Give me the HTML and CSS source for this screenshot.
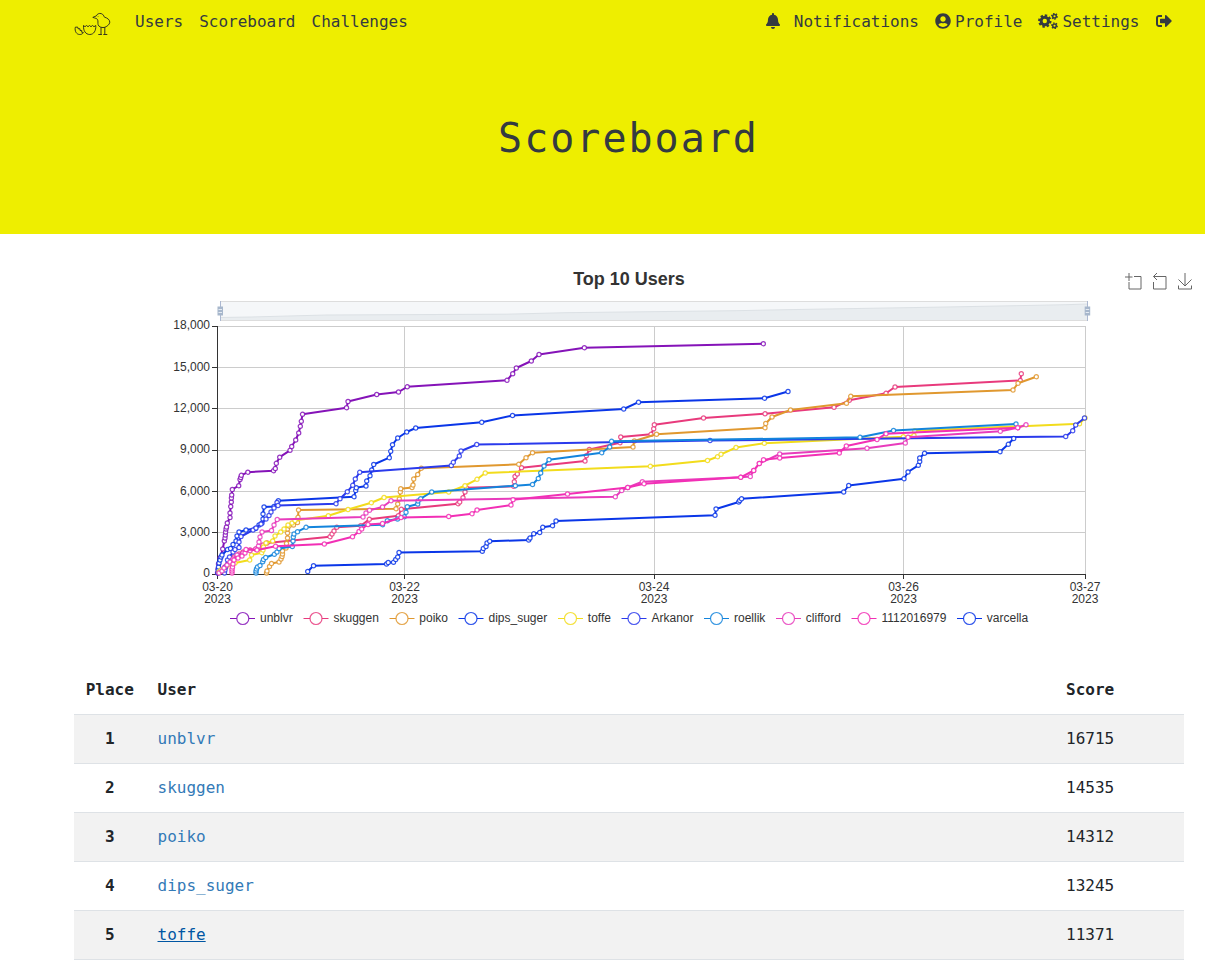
FILE: index.html
```html
<!DOCTYPE html>
<html lang="en">
<head>
<meta charset="utf-8">
<title>Scoreboard</title>
<link rel="stylesheet" href="styles.css">
</head>
<body>
<div class="page">
  <header class="hero">
    <nav class="navbar">
      <a class="brand" href="#" aria-label="Home">
        <svg width="38" height="24" viewBox="74 12 38 24" fill="none" stroke="#222" stroke-width=".9">
          <path d="M92.800 17.400l3.500-1.500c.8-2 3-2.900 4.900-2.300 2 .5 2.500 2.300 3.300 3.600 3 .7 5.300 2.700 5.300 5-.2 2.400-3 4.600-5.700 5.300-3 .3-5.400-.8-6-2.800-.5-2.100.3-3.300-.6-5.200-.5-1-2.400-1.300-4.700-2.100z"/>
          <path d="M101 27.300v6.900m3.800-7v6.900m-6.500.4h3.600m1.400 0h4M97.800 16.500h.5"/>
          <path d="M83.500 25.500l1.500 1.200 1.500-1.200 1.500 1.200 1.500-1.200 1.500 1.200 1.500-1.200 1.500 1.200 1.800-1.200c.3 5.200-2 9-6 9-4.200 0-6.600-3.800-6.300-9z"/>
          <path d="M75.300 27.200c-.8 4 1.200 7.300 4.400 7.300 1.500 0 2.600-.4 3.700-1.900l-1.700-.4.100-1.600-1.800-.1v-1.700l-2-.1-.3-1.600z"/>
        </svg>
      </a>
      <a href="#">Users</a>
      <a href="#">Scoreboard</a>
      <a href="#">Challenges</a>
      <div class="account">
        <a class="notifications" href="#"><svg width="14" height="16" viewBox="0 0 448 512"><path d="M224 512c35.32 0 63.97-28.65 63.97-64H160.03c0 35.35 28.65 64 63.97 64zm215.39-149.71c-19.32-20.76-55.47-51.99-55.47-154.29 0-77.7-54.48-139.9-127.94-155.16V32c0-17.67-14.32-32-31.98-32s-31.98 14.33-31.98 32v20.84C118.56 68.1 64.08 130.3 64.08 208c0 102.3-36.15 133.53-55.47 154.29-6 6.45-8.66 14.16-8.61 21.71.11 16.4 12.98 32 32.1 32h383.8c19.12 0 32-15.6 32.1-32 .05-7.55-2.61-15.27-8.61-21.71z"/></svg>Notifications</a>
        <a class="profile" href="#"><svg width="16" height="16" viewBox="0 0 496 512"><path d="M248 8C111 8 0 119 0 256s111 248 248 248 248-111 248-248S385 8 248 8zm0 96c48.6 0 88 39.4 88 88s-39.4 88-88 88-88-39.4-88-88 39.4-88 88-88zm0 344c-58.7 0-111.3-26.6-146.5-68.2 18.8-35.4 55.6-59.8 98.5-59.8 2.4 0 4.8.4 7.1 1.1 13 4.2 26.6 6.9 40.9 6.9 14.3 0 28-2.7 40.9-6.9 2.3-.7 4.7-1.1 7.1-1.1 42.9 0 79.7 24.4 98.5 59.8C359.3 421.4 306.7 448 248 448z"/></svg>Profile</a>
        <a class="settings" href="#"><svg width="20" height="16" viewBox="0 0 20 16" fill="none" stroke="#343a40">
          <circle cx="6.800" cy="8" r="3.700" stroke-width="3"/>
          <circle cx="6.800" cy="8" r="5.600" stroke-width="2.200" pathLength="16" stroke-dasharray="1.100 .9 1.100 .9"/>
          <circle cx="16.500" cy="3.300" r="1.800" stroke-width="1.500"/>
          <circle cx="16.500" cy="3.300" r="2.800" stroke-width="1.300" pathLength="12" stroke-dasharray="1"/>
          <circle cx="16.500" cy="12.700" r="1.800" stroke-width="1.500"/>
          <circle cx="16.500" cy="12.700" r="2.800" stroke-width="1.300" pathLength="12" stroke-dasharray="1"/>
        </svg>Settings</a>
        <a class="logout" href="#" aria-label="Logout"><svg width="16" height="16" viewBox="0 0 512 512"><path d="M497 273L329 441c-15 15-41 4.500-41-17v-96H152c-13.300 0-24-10.700-24-24v-96c0-13.300 10.700-24 24-24h136V88c0-21.400 25.900-32 41-17l168 168c9.300 9.400 9.300 24.600 0 34zM192 436v-40c0-6.600-5.400-12-12-12H96c-17.700 0-32-14.300-32-32V160c0-17.700 14.300-32 32-32h84c6.600 0 12-5.400 12-12V76c0-6.600-5.400-12-12-12H96c-53 0-96 43-96 96v192c0 53 43 96 96 96h84c6.600 0 12-5.400 12-12z"/></svg></a>
      </div>
    </nav>
    <h1>Scoreboard</h1>
  </header>

  <main>
    <svg class="chart" width="1205" height="400" viewBox="0 250 1205 400">
      <defs>
        <marker id="m0" class="dot s0" markerUnits="userSpaceOnUse" markerWidth="6" markerHeight="6" refX="3" refY="3"><circle cx="3" cy="3" r="2.100"/></marker>
        <marker id="m1" class="dot s1" markerUnits="userSpaceOnUse" markerWidth="6" markerHeight="6" refX="3" refY="3"><circle cx="3" cy="3" r="2.100"/></marker>
        <marker id="m2" class="dot s2" markerUnits="userSpaceOnUse" markerWidth="6" markerHeight="6" refX="3" refY="3"><circle cx="3" cy="3" r="2.100"/></marker>
        <marker id="m3" class="dot s3" markerUnits="userSpaceOnUse" markerWidth="6" markerHeight="6" refX="3" refY="3"><circle cx="3" cy="3" r="2.100"/></marker>
        <marker id="m4" class="dot s4" markerUnits="userSpaceOnUse" markerWidth="6" markerHeight="6" refX="3" refY="3"><circle cx="3" cy="3" r="2.100"/></marker>
        <marker id="m5" class="dot s5" markerUnits="userSpaceOnUse" markerWidth="6" markerHeight="6" refX="3" refY="3"><circle cx="3" cy="3" r="2.100"/></marker>
        <marker id="m6" class="dot s6" markerUnits="userSpaceOnUse" markerWidth="6" markerHeight="6" refX="3" refY="3"><circle cx="3" cy="3" r="2.100"/></marker>
        <marker id="m7" class="dot s7" markerUnits="userSpaceOnUse" markerWidth="6" markerHeight="6" refX="3" refY="3"><circle cx="3" cy="3" r="2.100"/></marker>
        <marker id="m8" class="dot s8" markerUnits="userSpaceOnUse" markerWidth="6" markerHeight="6" refX="3" refY="3"><circle cx="3" cy="3" r="2.100"/></marker>
        <marker id="m9" class="dot s9" markerUnits="userSpaceOnUse" markerWidth="6" markerHeight="6" refX="3" refY="3"><circle cx="3" cy="3" r="2.100"/></marker>
      </defs>

      <text class="title" x="629" y="285">Top 10 Users</text>

      <g class="toolbox">
        <path d="M1125 277h7.500M1129 273v8M1134 276.500h7v12.500h-12v-7"/>
        <path d="M1157 273l-3.500 3.500 3.500 3.500M1153.500 276.500h12.500v12.500h-12.500v-7"/>
        <path d="M1185 273v13M1178.500 279.500l6.500 6.500 6.500-6.500M1178.500 285.500v3.500h13v-3.500"/>
      </g>

      <rect x="220.500" y="301.500" width="867" height="19" fill="#f5f7f9" stroke="#ddd"/>
      <path d="M221 320v-2.500l30-.5 75-2 180-.8 60-1.500 170-2 50-1 90-1.500 60-1 80-1.500 50-1 21-.7V320z" fill="#e9edf0"/>
      <path d="M221 317.500l30-.5 75-2 180-.8 60-1.500 170-2 50-1 90-1.500 60-1 80-1.500 50-1 21-.7" fill="none" stroke="#dce1e5"/>
      <g stroke="#acb8d1">
        <path d="M220.500 301v20M1087.500 301v20"/>
        <g fill="#a7b7cc" stroke="none"><rect x="217.500" y="306.500" width="5.500" height="9"/><rect x="1084.700" y="306.500" width="5.500" height="9"/></g>
        <path d="M218.500 309.500h3.500m-3.500 3h3.500M1085.700 309.500h3.500m-3.500 3h3.500" stroke="#e4eaf2"/>
      </g>

      <path class="grid" d="M218 326.500h868M218 367.500h868M218 408.500h868M218 450.500h868M218 491.500h868M218 532.500h868M404.500 326v248M654.500 326v248M903.500 326v248M1085.500 326v248"/>
      <path class="axis" d="M217.500 326v248.500M217 574.500h869M212 326.500h5M212 367.500h5M212 408.500h5M212 450.500h5M212 491.500h5M212 532.500h5M212 574.500h5M217.500 574v5M404.500 574v5M654.500 574v5M903.500 574v5M1085.500 574v5"/>
      <g class="label y-label">
        <text x="210" y="329">18,000</text><text x="210" y="371">15,000</text><text x="210" y="412">12,000</text><text x="210" y="453">9,000</text><text x="210" y="495">6,000</text><text x="210" y="536">3,000</text><text x="210" y="577">0</text>
      </g>
      <g class="label x-label">
        <text x="217.500" y="591">03-20</text><text x="217.500" y="603">2023</text>
        <text x="404.500" y="591">03-22</text><text x="404.500" y="603">2023</text>
        <text x="654" y="591">03-24</text><text x="654" y="603">2023</text>
        <text x="903.500" y="591">03-26</text><text x="903.500" y="603">2023</text>
        <text x="1085" y="591">03-27</text><text x="1085" y="603">2023</text>
      </g>

      <g class="series">
        <polyline class="s0" points="217.500,573 218,569 218.500,564 220,558 222.700,549 224.300,541 225,538 225.300,535 225.600,532 226,529 226.500,527 227.300,523 230,517.500 230,513 230.700,506.500 231.300,502 231.400,498 231.700,495 232.300,489.500 238.700,485.700 240,479.500 240.700,477.500 241.300,475.300 247.800,472.200 273.500,470.700 275.300,468.500 276.300,463.300 279.700,457.200 290,450.300 291.700,446.500 295.700,440 298.700,433 300.300,426.300 301.300,421.300 302.500,414.300 346.500,407.700 348,401.500 376.700,394.500 398.500,392 407.200,386.800 507,380.300 512.700,373.700 516.300,368 531.300,361 539,354.500 584.300,347.700 763.300,343.700"/>
        <polyline class="s1" points="219,572 222,570 225,567 228,564 231,561 234,557 239,554 243,552 250,550 256,549 259,548 263,545 267,543 330,536.700 332,534 334,531 336.700,527.300 360.700,525.700 369.300,519.300 398.300,515.700 401.300,509.300 458,503.700 459.700,502 463,497.700 465,492 466.300,487.700 513.700,486.300 514.300,481.700 515,476.500 517.300,474 521.500,467.800 585,461 586.300,455.700 589.300,449.500 620,442.700 620.700,437 651,434.300 653.700,428.700 654.300,424.700 703.500,418 765,413.800 834,407.300 849.300,400.300 886,393.300 895,387 1020.300,380.500 1021.300,373.700"/>
        <polyline class="s2" points="266.500,573 267,571 269.500,566.500 271.500,563.500 279,562 281,559 282,556.500 282.500,554 282.500,551 286,548 286.500,543.500 287.500,538 287.500,533 287.500,529 289,526 293.500,525 297.500,522.500 298,517.300 298.500,510 396,508.700 397.700,504 399.300,499 400.300,492 400.700,488.700 412,487.500 413,485 413.700,479 417.700,474.500 421.200,468.300 518.700,464.300 526,457.700 532.500,452.700 633,447 634.300,441 656.500,434.300 765,427.700 765.700,423.500 772,417 790.500,410 846.500,403.300 850.700,396.300 1013,390 1018,383.300 1036.300,376.700"/>
        <polyline class="s3" points="218,573 218.200,570 218.500,567 219,563 220,560 221,557 222,555 227.500,549.500 230.500,548.500 233,544.500 236,541 237,536 239,532 246,530 255.500,528.500 259,525 262,523 263,519 263,514 264,507 274,506.500 278.300,500.700 354,496.700 355.700,490.500 356.300,487.700 366,486 366.700,481 370,475.700 371.700,470 373.700,464.500 389.300,457.700 390.700,451.300 392.500,444.700 397.700,438 406.700,432 415.700,428 481.700,422.300 512.500,415.500 623.700,409 638.500,402.200 764.500,398.200 788,391.500"/>
        <polyline class="s4" points="219,572 221,570 226,567 229,564 235,563 249.700,560 251.500,555 261.700,552.700 263,550 263.500,547 266,543 272.700,541 275,536 280.700,532 284,529 288,525 292,523 295,520.500 328.300,515.700 348,509.500 371.300,502.700 384,497.500 448.700,492 465,485.700 477,479.300 485.200,473 650.300,466.300 707.500,460.500 717.500,456.700 721,454.300 736,447.500 764.300,443.300 903.300,436.700 914,435.500 914.700,430.700 1079.500,423.800 1085,418"/>
        <polyline class="s5" points="224.500,573 225,570 225.300,567 227.500,560 229.500,557 233,552 235,549.500 239,547.500 239,542 241,536.500 253,530 256,528 261,524 266,519 269,515.500 271,512 274,508 277,502.500 278,505.500 336,503.700 340,498.700 347.300,491.700 352.700,485.300 355.300,479 359.700,472.300 451.300,465.500 453.300,462.300 459.300,456 461,451 476.700,444.500 710,440.500 1065.700,436.500 1072.700,430.700 1075.700,425 1084.500,418"/>
        <polyline class="s6" points="256,573 256,571 256.500,569 257.500,567 260,565.500 262.700,561.700 263.500,559.500 265.700,557.500 274.300,554.300 277,552 279,548.500 292.300,546.500 293,541 293.300,537 294,534 297.500,531.700 306,527.300 382.500,524.700 387.300,520.700 397.500,519 404.300,516.700 406,512.300 407.300,506.700 417.700,504 418,501 420.700,498.700 431.700,492 515.300,485.700 532.500,484.500 538.300,478.500 540.700,473 544,466 549,459.700 601.700,452.700 609.700,447 611.500,441.300 860,437.300 893.500,430.500 1016,424"/>
        <polyline class="s7" points="219,573 222,571 224,568 227,565 230,562 233,559 237,555 243,553 250,550.500 255.700,549 258.500,546 259,542 260,537 262,532 271.500,530.500 274,525 277.200,519.500 363,517 366,513 369.500,510.300 382.500,507 391,500.700 615.300,496.800 621.700,490.500 627.700,487.500 642.300,481.700 740.700,477.300 750.300,476.500 753.700,470.500 759.300,463.500 779.700,454 867,448.300 905.300,443 908,437.300 1000.300,431.300 1017.700,427.700 1026,424.700"/>
        <polyline class="s8" points="232,573 232,571 232,569 232.500,567 233,564 234,560 238,558 242,556 245,553 246,549.500 257,550 275.500,546.300 324.300,544 352.500,536.800 359,531.500 361.700,529 368,524.500 382.500,523.500 401,517.500 448.700,516.500 472,513.700 477,510 511,505 513,499.700 567.500,494 627.700,487.500 644,483.700 740.700,477.300 753.700,470.500 759.300,463.500 763.500,459.700 779.700,458 839.300,453 846.300,446 877,439.500 886,433.700 1017.700,427.700"/>
        <polyline class="s9" points="307.700,571.500 313.500,565.700 386.500,564 388.200,562.500 393.500,562.300 395.700,559.500 397.700,557 399,552.500 482.300,551.300 483.300,548.500 486,546.500 487,543 489.700,541.300 528.700,540 530,538 533.700,533.800 539.700,532.500 542.700,527.300 552.500,525.700 556,521 715,515.300 716,509 738.700,502 739.700,500.500 741.500,498.800 843.700,492 848.700,485.500 904,478.700 908,472 918.300,465.300 919.700,461.500 919.700,458 924.500,453.300 1000,451.700 1008.300,444.300 1013.700,438.500"/>
      </g>

      <g class="legend">
        <g class="s0"><path d="M230 618.500h25"/><circle cx="242.800" cy="618.500" r="6"/><text x="260" y="622">unblvr</text></g>
        <g class="s1"><path d="M303.500 618.500h25"/><circle cx="316" cy="618.500" r="6"/><text x="333.500" y="622">skuggen</text></g>
        <g class="s2"><path d="M389.500 618.500h25"/><circle cx="402" cy="618.500" r="6"/><text x="419.300" y="622">poiko</text></g>
        <g class="s3"><path d="M458.500 618.500h25"/><circle cx="471" cy="618.500" r="6"/><text x="488.500" y="622">dips_suger</text></g>
        <g class="s4"><path d="M558 618.500h25"/><circle cx="570.500" cy="618.500" r="6"/><text x="587.800" y="622">toffe</text></g>
        <g class="s5"><path d="M621.500 618.500h25"/><circle cx="634" cy="618.500" r="6"/><text x="651.500" y="622">Arkanor</text></g>
        <g class="s6"><path d="M704 618.500h25"/><circle cx="716.500" cy="618.500" r="6"/><text x="734" y="622">roellik</text></g>
        <g class="s7"><path d="M776 618.500h25"/><circle cx="788.500" cy="618.500" r="6"/><text x="805.800" y="622">clifford</text></g>
        <g class="s8"><path d="M851.500 618.500h25"/><circle cx="864" cy="618.500" r="6"/><text x="881.500" y="622">1112016979</text></g>
        <g class="s9"><path d="M957 618.500h25"/><circle cx="969.500" cy="618.500" r="6"/><text x="986.800" y="622">varcella</text></g>
      </g>
    </svg>

    <table class="standings">
      <thead><tr><th class="place">Place</th><th>User</th><th class="score">Score</th></tr></thead>
      <tbody>
        <tr><th class="place">1</th><td><a href="#">unblvr</a></td><td>16715</td></tr>
        <tr><th class="place">2</th><td><a href="#">skuggen</a></td><td>14535</td></tr>
        <tr><th class="place">3</th><td><a href="#">poiko</a></td><td>14312</td></tr>
        <tr><th class="place">4</th><td><a href="#">dips_suger</a></td><td>13245</td></tr>
        <tr><th class="place">5</th><td><a class="active" href="#">toffe</a></td><td>11371</td></tr>
      </tbody>
    </table>
  </main>
</div>
</body>
</html>
```
FILE: styles.css
```css
* { box-sizing: border-box; }
html { overflow: hidden; }
body {
  margin: 0;
  height: 965px;
  overflow: hidden;
  background: #fff;
  color: #212529;
  font: 16px/24px "DejaVu Sans Mono", monospace;
}
.page { width: 1258px; }
.hero { height: 234px; background: #eeee00; color: #343a40; }
.navbar {
  display: flex;
  align-items: center;
  gap: 16px;
  height: 44px;
  padding-left: 74px;
}
.navbar a { display: flex; align-items: center; color: #343a40; text-decoration: none; }
.navbar svg { flex: none; fill: #343a40; margin-top: -2px; }
.navbar .brand { width: 45px; margin-top: 5px; }
.navbar .brand svg, .navbar .settings svg { fill: none; }
.account { display: flex; gap: 16px; margin-left: auto; padding-right: 86.500px; }
.notifications { gap: 13.500px; }
.profile, .settings { gap: 4px; }
.hero h1 {
  margin: 70px 0 0;
  font-size: 40px;
  line-height: 48px;
  font-weight: 400;
  letter-spacing: 2px;
  text-align: center;
  text-indent: -1px;
}

.chart { display: block; margin-top: 16px; font-family: "Liberation Sans", Arial, sans-serif; }
.title { font-size: 18px; font-weight: 700; text-anchor: middle; fill: #333; }
.toolbox { fill: none; stroke: #666; }
.grid { stroke: #ccc; }
.axis { stroke: #333; }
.label { font-size: 12px; fill: #333; }
.y-label { text-anchor: end; }
.x-label { text-anchor: middle; }
.s0 { stroke: #8513b8; }
.s1 { stroke: #e83a7c; }
.s2 { stroke: #e0982f; }
.s3 { stroke: #0a36e8; }
.s4 { stroke: #f2dc1c; }
.s5 { stroke: #2a3aec; }
.s6 { stroke: #1384dc; }
.s7 { stroke: #e83cbc; }
.s8 { stroke: #f22fb5; }
.s9 { stroke: #0a36e8; }
.series polyline { fill: none; stroke-width: 2; stroke-linejoin: bevel; }
.dot { fill: #fff; stroke-width: 1.2; stroke-opacity: .85; overflow: visible; }
polyline.s0 { marker: url(#m0); }
polyline.s1 { marker: url(#m1); }
polyline.s2 { marker: url(#m2); }
polyline.s3 { marker: url(#m3); }
polyline.s4 { marker: url(#m4); }
polyline.s5 { marker: url(#m5); }
polyline.s6 { marker: url(#m6); }
polyline.s7 { marker: url(#m7); }
polyline.s8 { marker: url(#m8); }
polyline.s9 { marker: url(#m9); }
.legend circle { fill: #fff; stroke-width: 1.2; stroke-opacity: .85; }
.legend text { font-size: 12px; fill: #333; stroke: none; }

.standings {
  width: 1110px;
  margin: 16px 0 0 74px;
  border-collapse: separate;
  border-spacing: 0;
  table-layout: fixed;
  text-align: left;
}
.standings th, .standings td { height: 49px; padding: 12px; border-bottom: 1px solid #dee2e6; }
.standings .place { width: 71.500px; text-align: center; padding: 12px 0; }
.standings .score { width: 130px; }
.standings tbody tr:nth-child(odd) { background: #f2f2f2; }
.standings a { color: #337ab7; text-decoration: none; }
.standings a.active { color: #0056a3; text-decoration: underline; }
```
